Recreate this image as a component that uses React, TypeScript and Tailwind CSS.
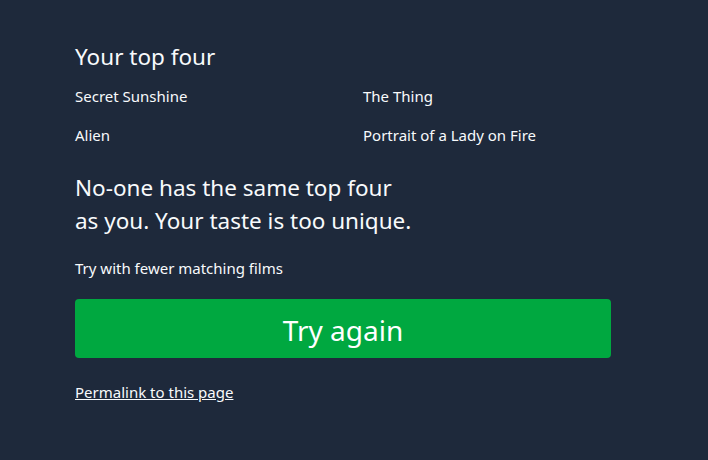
export default function App() {
  const films = ["Secret Sunshine", "The Thing", "Alien", "Portrait of a Lady on Fire"];
  return (
    <div className="min-h-[460px] w-full bg-[#1e293b] text-[#f8fafc]" style={{ fontFamily: '"Noto Sans", "Open Sans", sans-serif' }}>
      <div className="pl-[75px] pt-[41px] w-[611px]">
        <h2 className="text-[22.5px] leading-[32px]">Your top four</h2>
        <div className="grid grid-cols-[288px_1fr] gap-y-[17px] mt-[12px] text-[15px] leading-[22px]">
          {films.map((f) => (
            <div key={f}>{f}</div>
          ))}
        </div>
        <p className="mt-[25px] text-[22.5px] leading-[33px] max-w-[340px]">
          No-one has the same top four as you. Your taste is too unique.
        </p>
        <p className="mt-[20px] text-[15px] leading-[22px]">Try with fewer matching films</p>
        <button className="mt-[20px] w-full h-[59px] rounded-[4px] bg-[#00a840] text-white text-[28px] leading-none pt-[2px]">Try again</button>
        <a href="#" className="block mt-[23px] text-[15px] leading-[22px] underline">Permalink to this page</a>
      </div>
    </div>
  );
}
